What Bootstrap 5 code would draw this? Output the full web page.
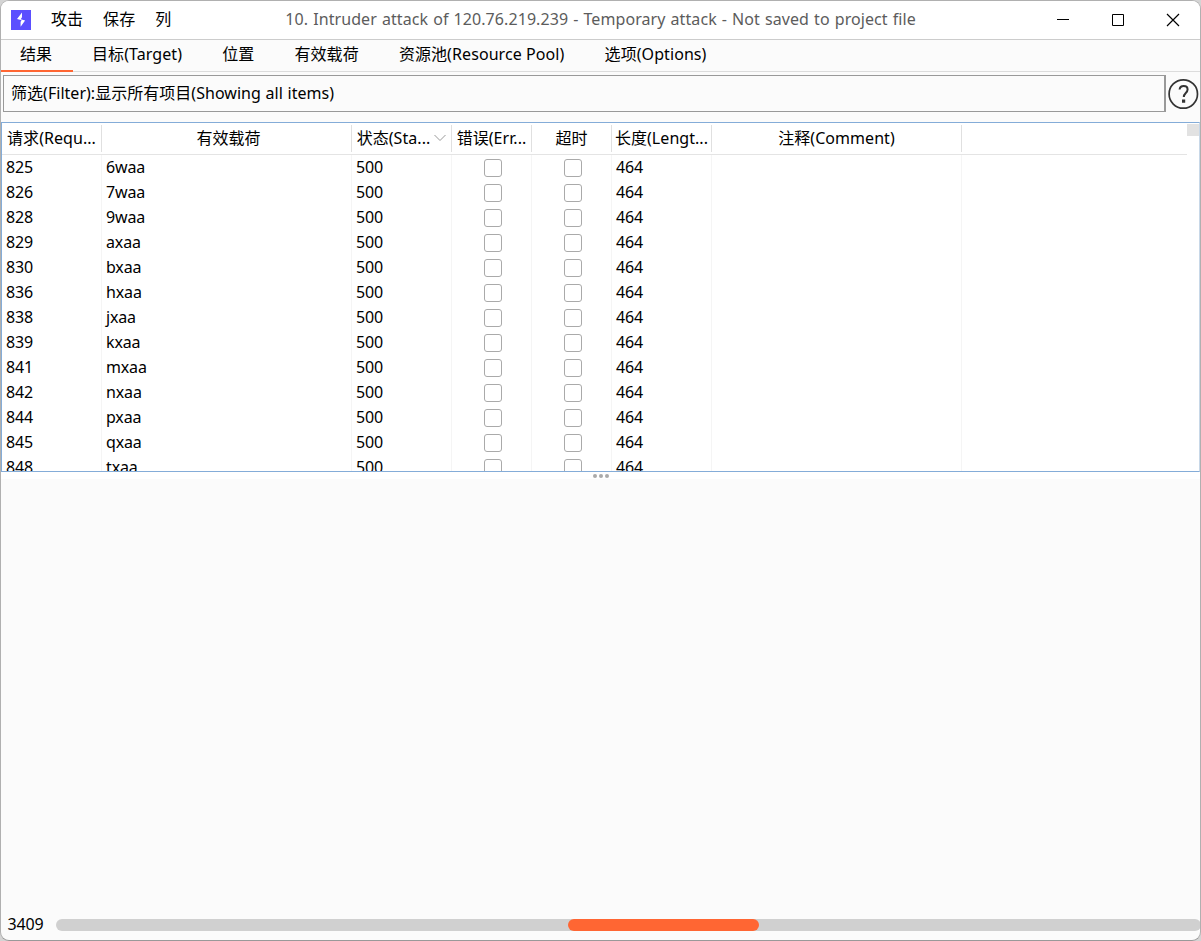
<!DOCTYPE html>
<html lang="zh-CN">
<head>
<meta charset="utf-8">
<meta name="viewport" content="width=device-width, initial-scale=1">
<title>Intruder attack</title>
<link href="https://cdn.jsdelivr.net/npm/bootstrap@5.3.0/dist/css/bootstrap.min.css" rel="stylesheet">
<style>
body { font: 16px/24px "Noto Sans", "Noto Sans CJK SC", sans-serif; color: #000; background: #d4d4d4; letter-spacing: -.15px; }
.app-window { border: 1px solid #b0b0b0; border-bottom-color: #999; border-radius: 9px; background: #fbfbfb; }
.title-bar { height: 39px; border-bottom: 1px solid #ccc; padding-left: 10px; padding-bottom: 2px; background: #fff; }
.app-logo { margin-top: 2px; }
.app-menu { gap: 20px; margin-left: 20px; letter-spacing: 0.05px; }
.win-title { margin-left: 114px; color: #5c5c5c; letter-spacing: .08px; word-spacing: .8px; }
.win-buttons { gap: 41px; margin: 2px 20px 0 0; }
.tab-strip { height: 32px; border-bottom: 1px solid #dcdcdc; flex-wrap: nowrap; letter-spacing: .08px; }
.tab-strip .nav-link { color: #000; padding: 2px 20.1px 0 20px; height: 32px; border-bottom: 2px solid transparent; }
.tab-strip .nav-link.active { border-color: #ff6633; padding: 2px 20px 0 19px; width: 72px; margin-right: -1px; }
.filter-row { height: 50px; padding: 3px 2px 0; }
.filter-box { width: 1163px; height: 37px; border: 1px solid #999; border-right-width: 2px; padding: 0 0 2px 7px; letter-spacing: .03px; word-spacing: .5px; }
.result-pane { height: 350px; border: 1px solid #84acd8; border-right-color: #c8d8e8; background: #fff; }
.result-grid { display: grid; grid-template-columns: 100px 250px 100px 80px 80px 100px 250px 1fr; }
.head-row { height: 32px; border-bottom: 1px solid #e4e4e4; margin-right: 12px; letter-spacing: .05px; }
.head-row > div { margin: 2px 0; padding-bottom: 2px; border-right: 1px solid #e0e0e0; display: flex; align-items: center; justify-content: center; white-space: nowrap; }
.head-row > div:last-child { border: 0; }
.data-row { height: 25px; }
.data-row > div { border-right: 1px solid #f5f5f5; padding-left: 4px; line-height: 25px; }
.data-row > div:last-child { border: 0; }
.tick-box { display: block; width: 18px; height: 18px; border: 1px solid #aaa; border-radius: 3px; margin: 3.5px 0 0 28px; }
.scroll-thumb { width: 12px; height: 12px; background: #e2e2e2; top: 1px; right: 0; }
.split-bar { height: 7px; background: #fff; gap: 2px; }
.split-bar i { width: 4px; height: 4px; border-radius: 50%; background: #aaa; }
.status-row { height: 31px; padding-left: 6.5px; }
.status-row > span { padding-bottom: 2px; width: 36.5px; }
.attack-progress { height: 12px; width: 1145px; border-radius: 6px; background: #d0d0d0; margin-left: 12px; }
.attack-progress .progress-bar { width: 191px; margin-left: 512px; border-radius: 6px; background: #ff6633; }
</style>
<script src="https://cdn.jsdelivr.net/npm/bootstrap@5.3.0/dist/js/bootstrap.bundle.min.js"></script>
</head>
<body class="overflow-hidden">
<div class="app-window vh-100 d-flex flex-column overflow-hidden">
  <header class="title-bar d-flex align-items-center flex-shrink-0">
    <svg class="app-logo" width="20" height="20" viewBox="0 0 20 20"><path fill="#5b4fff" d="M0 0h20v20H0z"/><path fill="#fff" d="M11 2.500v4.800L9.700 9.300l4.400 1.100-4.500 6.300v-4.900l1-1.500-4.600-1.200z"/></svg>
    <nav class="app-menu d-flex"><span>攻击</span><span>保存</span><span>列</span></nav>
    <div class="win-title text-nowrap">10. Intruder attack of 120.76.219.239 - Temporary attack - Not saved to project file</div>
    <div class="win-buttons d-flex ms-auto">
      <svg width="14" height="14" viewBox="0 0 14 14"><path stroke="#000" d="M1 6.500h12"/></svg>
      <svg width="14" height="14" viewBox="0 0 14 14"><path fill="none" stroke="#000" d="M1.500 1.500h11v11h-11z"/></svg>
      <svg width="14" height="14" viewBox="0 0 14 14"><path stroke="#000" stroke-width="1.2" d="M1 1l12 12M13 1L1 13"/></svg>
    </div>
  </header>
  <nav class="tab-strip nav flex-shrink-0 text-nowrap">
    <a class="nav-link active">结果</a><a class="nav-link">目标(Target)</a><a class="nav-link">位置</a><a class="nav-link">有效载荷</a><a class="nav-link">资源池(Resource Pool)</a><a class="nav-link">选项(Options)</a>
  </nav>
  <div class="filter-row d-flex flex-shrink-0">
    <div class="filter-box d-flex align-items-center flex-shrink-0">筛选(Filter):显示所有项目(Showing all items)</div>
    <svg class="flex-shrink-0" width="33" height="36" viewBox="0 0 33 36"><circle cx="17.300" cy="19" r="14.200" fill="none" stroke="#333" stroke-width="1.700"/><path fill="none" stroke="#333" stroke-width="2" d="M13.600 14.500c.4-4.600 8-4.600 8 0 0 3.400-3.800 3.600-3.800 7.400"/><path fill="#333" d="M16 24.500h3.200v3.200H16z"/></svg>
  </div>
  <section class="result-pane position-relative overflow-hidden flex-shrink-0">
    <div class="scroll-thumb position-absolute"></div>
    <div class="result-grid head-row">
      <div>请求(Requ...</div><div class="pe-0 ps-1">有效载荷</div>
      <div>状态(Sta...<svg class="ms-1" width="12" height="8" viewBox="0 0 12 8"><path d="M.5 1L6 6.500 11.500 1" fill="none" stroke="#999"/></svg></div>
      <div>错误(Err...</div><div>超时</div><div>长度(Lengt...</div><div>注释(Comment)</div><div></div>
    </div>
    <div id="rows"></div>
  </section>
  <div class="split-bar d-flex justify-content-center align-items-center flex-shrink-0"><i></i><i></i><i></i></div>
  <main class="flex-grow-1"></main>
  <footer class="status-row d-flex align-items-center flex-shrink-0">
    <span>3409</span><div class="attack-progress progress flex-shrink-0"><div class="progress-bar"></div></div>
  </footer>
</div>
<script>
const results = [[825,'6waa'],[826,'7waa'],[828,'9waa'],[829,'axaa'],[830,'bxaa'],[836,'hxaa'],[838,'jxaa'],[839,'kxaa'],[841,'mxaa'],[842,'nxaa'],[844,'pxaa'],[845,'qxaa'],[848,'txaa']];
document.getElementById('rows').innerHTML = results.map(([id, payload]) =>
  `<div class="result-grid data-row"><div>${id}</div><div>${payload}</div><div>500</div><div><span class="tick-box"></span></div><div><span class="tick-box"></span></div><div>464</div><div></div><div></div></div>`).join('');
</script>
</body>
</html>
